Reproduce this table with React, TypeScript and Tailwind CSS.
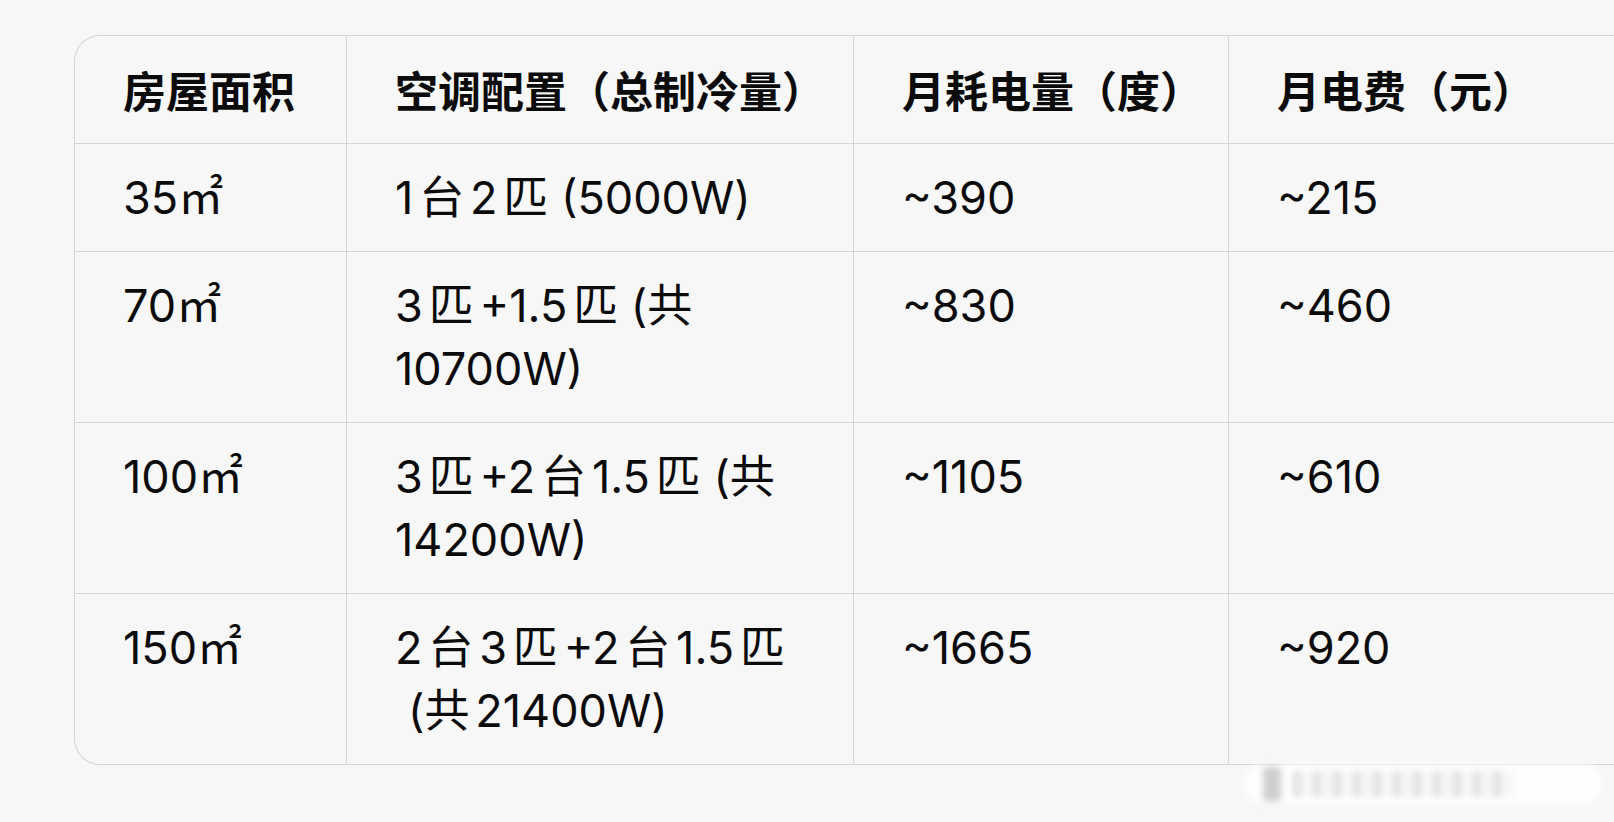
import React from "react";

const CJK = /[\u4e00-\u9fff]/;
const LATIN = /[A-Za-z0-9+.]/;

// mimic iOS auto spacing between CJK and latin runs
const spaced = (text: string) => {
  const out: React.ReactNode[] = [];
  const chars = Array.from(text);
  chars.forEach((ch, i) => {
    const prev = chars[i - 1];
    if (
      prev &&
      ((CJK.test(prev) && LATIN.test(ch)) || (LATIN.test(prev) && CJK.test(ch)))
    ) {
      out.push(<span key={`s${i}`} className="inline-block w-[0.13em]" />);
    }
    out.push(ch);
  });
  return out;
};

type Row = {
  area: string;
  config: string[];
  kwh: string;
  cost: string;
};

const rows: Row[] = [
  { area: "35㎡", config: ["1台2匹 (5000W)"], kwh: "~390", cost: "~215" },
  { area: "70㎡", config: ["3匹+1.5匹 (共", "10700W)"], kwh: "~830", cost: "~460" },
  { area: "100㎡", config: ["3匹+2台1.5匹 (共", "14200W)"], kwh: "~1105", cost: "~610" },
  { area: "150㎡", config: ["2台3匹+2台1.5匹", "(共21400W)"], kwh: "~1665", cost: "~920" },
];

const headers = ["房屋面积", "空调配置（总制冷量）", "月耗电量（度）", "月电费（元）"];

const COLS = "grid grid-cols-[272px_507px_375px_520px]";
const CELL = "border-r border-[#d6d6d6] px-[48px] py-[22px]";

export default function App() {
  return (
    <div className="relative w-[1614px] h-[822px] overflow-hidden bg-[#f7f7f7] pl-[74px] pt-[35px] font-[Inter,'Noto_Sans_CJK_SC',sans-serif] text-[45px] leading-[63px] text-[#0b0b0b]">
      <div className="w-max rounded-l-[26px] border-y border-l border-[#d6d6d6]">
        {/* header */}
        <div className={`${COLS} border-b border-[#d6d6d6]`}>
          {headers.map((h) => (
            <div
              key={h}
              className={`${CELL} pt-[25px] pb-[19px] text-[43px] font-semibold whitespace-nowrap`}
            >
              {h}
            </div>
          ))}
        </div>

        {rows.map((r, idx) => (
          <div
            key={r.area}
            className={`${COLS} ${idx < rows.length - 1 ? "border-b border-[#d6d6d6]" : ""}`}
          >
            <div className={CELL}>{r.area}</div>
            <div className={CELL}>
              {r.config.map((line, i) => (
                <span
                  key={line}
                  className={`block whitespace-nowrap ${idx === 3 && i === 1 ? "pl-[13px]" : ""}`}
                >
                  {spaced(line)}
                </span>
              ))}
            </div>
            <div className={CELL}>{r.kwh}</div>
            <div className={CELL}>{r.cost}</div>
          </div>
        ))}
      </div>

      {/* blurred watermark, bottom right */}
      <div className="absolute left-[1243px] top-[764px] flex h-[40px] w-[360px] items-center gap-[12px] rounded-full bg-white/80 pl-[20px] blur-[3px]">
        <div className="h-[34px] w-[18px] bg-[#cfcfcf]" />
        <div className="h-[26px] w-[220px] bg-[repeating-linear-gradient(90deg,#e2e2e2_0px,#e2e2e2_8px,#f6f6f6_8px,#f6f6f6_20px)]" />
      </div>
    </div>
  );
}
